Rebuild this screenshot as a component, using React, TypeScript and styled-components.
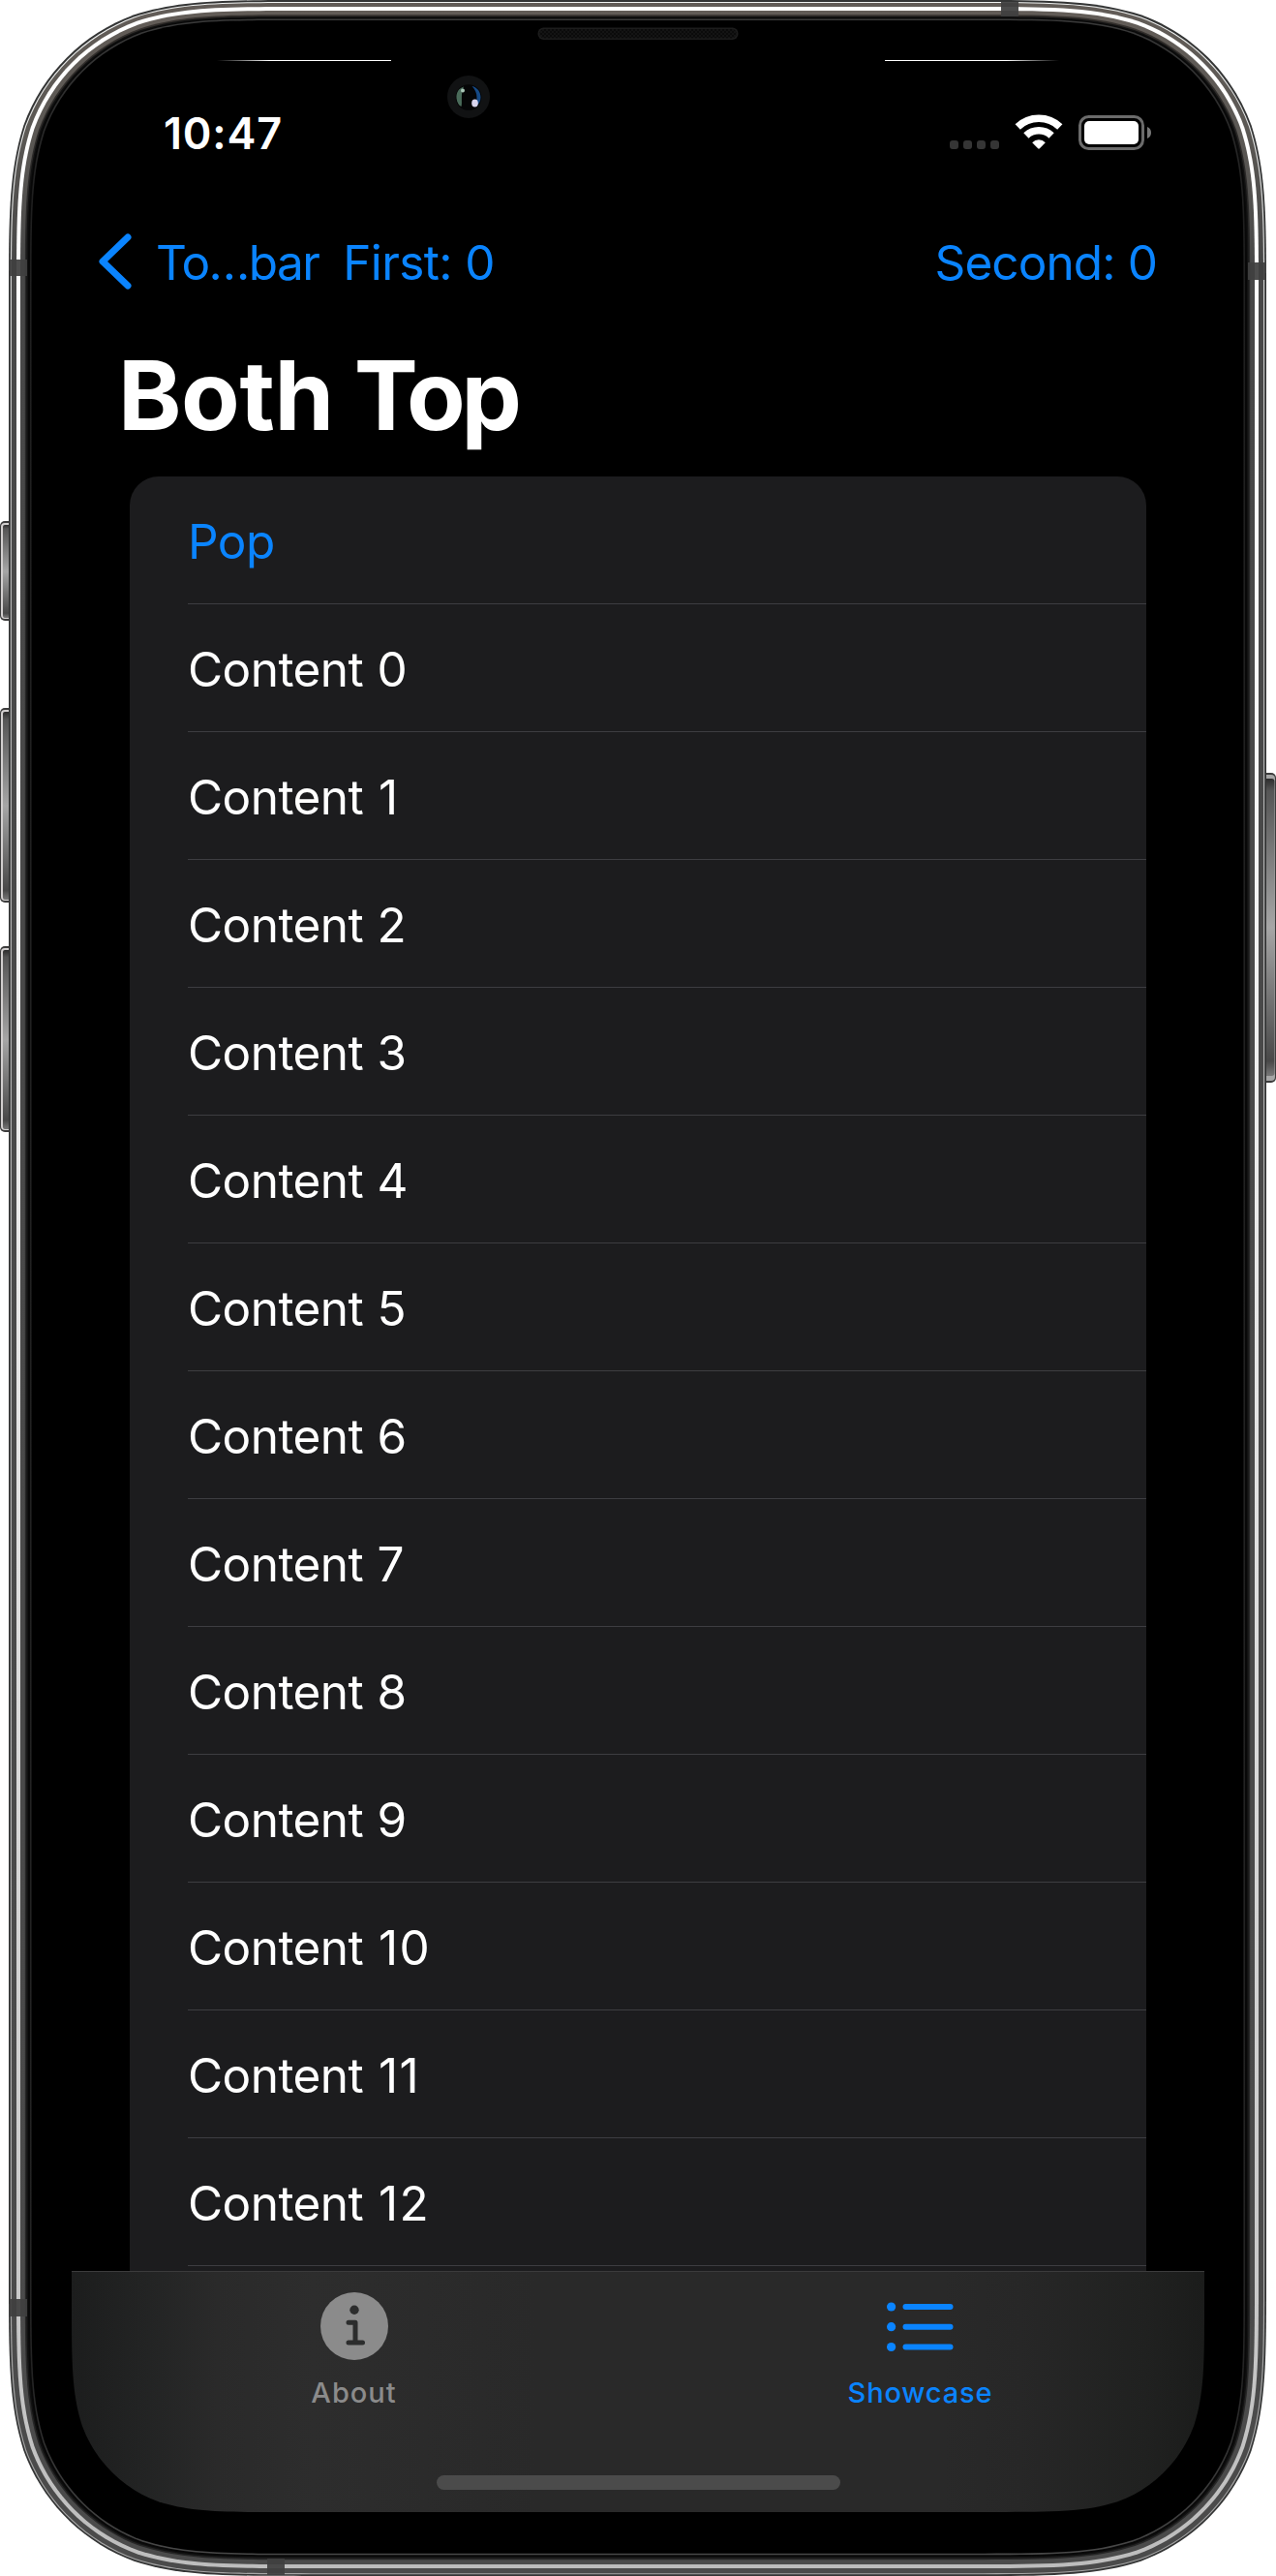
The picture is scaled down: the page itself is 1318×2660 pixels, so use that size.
import React from 'react';
import styled, { createGlobalStyle } from 'styled-components';

const BLUE = '#0a84ff';

const GlobalStyle = createGlobalStyle`
  body { margin: 0; background: #fff; }
`;

/** Rounded rectangle with continuous-curvature corners. */
function squircle(x0: number, y0: number, x1: number, y1: number, r: number): string {
  const corner = (
    cx: number, cy: number, ux: number, uy: number, vx: number, vy: number,
  ) => {
    // (ux, uy) points back along the incoming edge, (vx, vy) along the outgoing edge
    const p = (a: number, b: number) =>
      `${(cx + (ux * a + vx * b) * r).toFixed(2)} ${(cy + (uy * a + vy * b) * r).toFixed(2)}`;
    return (
      `L${p(1.528665, 0)} C${p(1.088493, 0)} ${p(0.868407, 0)} ${p(0.631494, 0.074911)} ` +
      `C${p(0.372824, 0.16906)} ${p(0.16906, 0.372824)} ${p(0.074911, 0.631494)} ` +
      `C${p(0, 0.868407)} ${p(0, 1.088493)} ${p(0, 1.528665)} `
    );
  };
  return (
    `M${(x0 + x1) / 2} ${y0} ` +
    corner(x1, y0, -1, 0, 0, 1) +
    corner(x1, y1, 0, -1, -1, 0) +
    corner(x0, y1, 1, 0, 0, -1) +
    corner(x0, y0, 0, 1, 1, 0) +
    'Z'
  );
}

const Device = styled.div`
  position: relative;
  box-sizing: border-box;
  width: 1318px;
  height: 2660px;
  padding: 62px 74px 66px;
  overflow: hidden;
  font-family: 'Inter', 'Liberation Sans', sans-serif;
  color: #fff;
`;

const Bezel = styled.svg`
  position: absolute;
  inset: 0;
  display: block;
`;

const Screen = styled.main`
  position: relative;
  display: flex;
  flex-direction: column;
  width: 1170px;
  height: 2532px;
`;

const StatusBar = styled.header`
  display: flex;
  align-items: center;
  justify-content: space-between;
  box-sizing: border-box;
  height: 141px;
  padding: 11px 55px 0 95px;
`;

const Text = styled.span<{ $track?: number }>`
  letter-spacing: ${(p) => p.$track ?? 0}px;
  white-space: pre;
`;

const Time = styled(Text)`
  padding-bottom: 1px;
  font-size: 45px;
  font-weight: 600;
`;

const StatusIcons = styled.svg`
  display: block;
`;

const NavBar = styled.nav`
  display: flex;
  align-items: center;
  height: 132px;
  padding: 0 49px 0 27.5px;
  color: ${BLUE};
  font-size: 49.5px;
`;

const NavButton = styled.button<{ $track: number; $left?: string }>`
  display: flex;
  align-items: center;
  gap: 23.5px;
  margin: 4px 0 0 ${(p) => p.$left ?? '0'};
  padding: 0;
  border: 0;
  background: none;
  color: inherit;
  font: inherit;
  letter-spacing: ${(p) => p.$track}px;
  white-space: nowrap;
`;

const Chevron = styled.svg`
  display: block;
  margin-top: -2px;
`;

const LargeTitle = styled.h1`
  display: flex;
  align-items: center;
  box-sizing: border-box;
  height: 157px;
  margin: 0;
  padding: 0 48px 12px;
  font-size: 99px;
  font-weight: 700;
`;

const TitleTail = styled(Text)`
  margin-left: -2px;
`;

const ListViewport = styled.section`
  flex: 1;
  min-height: 0;
  overflow: hidden;
  padding: 0 60px;
`;

const Card = styled.ul`
  min-height: 1900px;
  margin: 0;
  padding: 0;
  list-style: none;
  background: #1c1c1e;
  border-radius: 30px 30px 0 0;
`;

const Row = styled.li<{ $link?: boolean }>`
  display: flex;
  align-items: center;
  box-sizing: border-box;
  height: 132px;
  margin-left: 60px;
  padding-top: 2px;
  border-bottom: 1px solid #3d3d41;
  color: ${(p) => (p.$link ? BLUE : '#fff')};
  font-size: 49.5px;
`;

const Digits = styled.span<{ $lead: number }>`
  margin-left: ${(p) => p.$lead}px;
  letter-spacing: 1.3px;
`;

const TabBar = styled.footer`
  position: relative;
  display: flex;
  box-sizing: border-box;
  height: 249px;
  border-top: 1px solid #3b3b3c;
  background: linear-gradient(
    90deg, #1c1d1d 0, #232424 80px, #2a2a2a 150px, #2d2d2d 250px, #292929 480px,
    #292929 900px, #272727 980px, #202120 1110px, #1b1c1b 100%
  );
  clip-path: path('${squircle(0, -600, 1170, 249, 142)}');
`;

const Tab = styled.button<{ $active?: boolean; $track: number }>`
  display: flex;
  flex: 1;
  flex-direction: column;
  align-items: center;
  gap: 14px;
  margin: 0;
  padding: 20px 2px 0 0;
  border: 0;
  background: none;
  color: ${(p) => (p.$active ? BLUE : '#8b8b8b')};
  font: 500 29px/38px 'Inter', 'Liberation Sans', sans-serif;
  letter-spacing: ${(p) => p.$track}px;
`;

const HomeIndicator = styled.div`
  position: absolute;
  bottom: 23px;
  left: 377px;
  width: 417px;
  height: 15px;
  border-radius: 8px;
  background: #4b4b4b;
`;

// Edge insets (left/right, top, bottom) and paint of each ring, outermost first
const RINGS: [number, number, number, string][] = [
  [0, 0, 0, '#343535'],
  [1.8, 2, 1.7, 'url(#shine)'],
  [3, 3, 2.8, 'url(#metal)'],
  [8, 7, 8, 'url(#stripe)'],
  [12, 11, 12, 'url(#metal)'],
];

const INNER: [number, number, string][] = [
  [16.8, 0, 'url(#edge)'],
  [18.4, 0, '#111'],
  [20, 0, '#080808'],
  [22, 1, 'url(#lip)'],
  [23.6, 1, '#000'],
];

// Top edge and height of the left-hand keys
const SIDE_KEYS: [number, number][] = [
  [538, 103],
  [731, 201],
  [977, 192],
];

function Hardware() {
  return (
    <Bezel width="1318" height="2660" viewBox="0 0 1318 2660" aria-hidden="true">
      <defs>
        <linearGradient id="metal" x1="0" y1="0" x2="0" y2="1">
          <stop offset="0" stopColor="#625c57" />
          <stop offset="0.05" stopColor="#5b5854" />
          <stop offset="0.1" stopColor="#484848" />
          <stop offset="1" stopColor="#4b4b4b" />
        </linearGradient>
        <linearGradient id="stripe" x1="0" y1="0" x2="0" y2="1">
          <stop offset="0" stopColor="#fff" />
          <stop offset="0.25" stopColor="#fbfbfb" />
          <stop offset="0.9" stopColor="#c8c8c8" />
          <stop offset="1" stopColor="#bdbdbd" />
        </linearGradient>
        <linearGradient id="shine" x1="0" y1="0" x2="0" y2="1">
          <stop offset="0" stopColor="#f0f2f1" />
          <stop offset="0.2" stopColor="#b5b5b5" />
          <stop offset="1" stopColor="#a5a5a5" />
        </linearGradient>
        <linearGradient id="edge" x1="0" y1="0" x2="0" y2="1">
          <stop offset="0" stopColor="#332f2c" />
          <stop offset="0.1" stopColor="#262626" />
          <stop offset="1" stopColor="#262626" />
        </linearGradient>
        <linearGradient id="lip" x1="0" y1="0" x2="0" y2="1">
          <stop offset="0" stopColor="#3a3a3a" />
          <stop offset="0.07" stopColor="#1f1f1f" />
          <stop offset="0.93" stopColor="#242424" />
          <stop offset="1" stopColor="#484848" />
        </linearGradient>
        <linearGradient id="key" x1="0" y1="0" x2="0" y2="1">
          <stop offset="0" stopColor="#2c2c2c" />
          <stop offset="0.04" stopColor="#555" />
          <stop offset="0.5" stopColor="#a6a6a6" />
          <stop offset="0.95" stopColor="#484848" />
          <stop offset="1" stopColor="#777" />
        </linearGradient>
        <linearGradient id="glintL">
          <stop offset="0" stopColor="#fff" stopOpacity="0" />
          <stop offset="0.3" stopColor="#fff" />
          <stop offset="1" stopColor="#fff" />
        </linearGradient>
        <linearGradient id="glintR">
          <stop offset="0" stopColor="#fff" />
          <stop offset="0.7" stopColor="#fff" />
          <stop offset="1" stopColor="#fff" stopOpacity="0" />
        </linearGradient>
        <pattern id="mesh" width="4" height="4" patternUnits="userSpaceOnUse">
          <rect width="4" height="4" fill="#141414" />
          <circle cx="1" cy="1" r="1" fill="#070707" />
          <circle cx="3" cy="3" r="1" fill="#070707" />
        </pattern>
      </defs>

      {SIDE_KEYS.map(([y, h]) => (
        <g key={y}>
          <rect x="0" y={y} width="14" height={h} rx="5" fill="#3c3c3c" />
          <rect x="1" y={y + 2} width="14" height={h - 4} rx="4" fill="#d2cfcf" />
          <rect x="3" y={y + 4} width="14" height={h - 7} rx="2" fill="url(#key)" />
        </g>
      ))}
      <rect x="1300" y="798" width="18" height="320" rx="5" fill="#3c3c3c" />
      <rect x="1300" y="800" width="17" height="316" rx="4" fill="#a5a5a5" />
      <rect x="1300" y="804" width="16.5" height="307" rx="3" fill="url(#key)" />

      {RINGS.map(([side, top, bottom, fill]) => (
        <path
          key={side}
          d={squircle(9 + side, top, 1308 - side, 2660 - bottom, 205 - side)}
          fill={fill}
        />
      ))}
      {INNER.map(([side, extra, fill]) => (
        <path
          key={side}
          d={squircle(9 + side, side - 1.5 - extra, 1308 - side, 2660 - side + extra * 0.3, 205 - side)}
          fill={fill}
        />
      ))}

      <g fill="#404040" fillOpacity="0.93">
        <rect x="10" y="268" width="18" height="17" />
        <rect x="1289" y="271" width="18" height="18" />
        <rect x="1034" y="2" width="18" height="15" />
        <rect x="276" y="2642" width="18" height="17" />
        <rect x="10" y="2374" width="18" height="18" />
      </g>

      <rect x="555.5" y="28.5" width="207" height="12.5" rx="6" fill="#1c1c1c" />
      <rect x="557" y="30" width="204" height="9.5" rx="4.7" fill="url(#mesh)" />

      <rect x="224" y="62" width="180" height="1" fill="url(#glintL)" />
      <rect x="914" y="62" width="180" height="1" fill="url(#glintR)" />

      <circle cx="484" cy="100" r="22" fill="#111213" />
      <circle cx="484" cy="100.5" r="13.3" fill="#050506" />
      <path d="M479 89.500c-5 1.500-8 6-7.500 12 .4 4.500 2.600 7.500 5 8.500.7-3 .3-5 .4-9 0-5 .6-8 2.100-11.500Z" fill="#4a6b5a" />
      <path d="M487.500 89c5.500 1 9 6 9 11.500 0 4-2 7.500-4.500 9-1-2 .5-4.500.5-9s-2-8.500-5-11.500Z" fill="#164a86" />
      <circle cx="478" cy="93.5" r="2" fill="#abc8b8" />
      <ellipse cx="490.5" cy="106.5" rx="3.3" ry="4" fill="#d9d5ee" />
    </Bezel>
  );
}

function StatusGlyphs() {
  return (
    <StatusIcons width="208" height="40" viewBox="981 118 208 40" aria-hidden="true">
      {[981, 995, 1009, 1023].map((x) => (
        <rect key={x} x={x} y="145" width="9" height="9" rx="3" fill="#353535" />
      ))}
      <g fill="none" stroke="#fff" strokeWidth="7.6">
        <path d="M1051.200 131a31.500 31.500 0 0 1 43.600 0" />
        <path d="M1059.900 140a19 19 0 0 1 26.200 0" />
      </g>
      <path d="M1066.200 147.200a9.500 9.500 0 0 1 13.600 0l-5.900 6.100q-.9.900-1.800 0Z" fill="#fff" />
      <rect x="1115.5" y="120.5" width="65" height="33" rx="9" fill="none" stroke="#6b6b6b" strokeWidth="3" />
      <rect x="1120" y="125" width="56" height="24" rx="5" fill="#fff" />
      <path d="M1185 131v12c2.600-1 4-3.300 4-6s-1.400-5-4-6Z" fill="#777" />
    </StatusIcons>
  );
}

function InfoIcon() {
  return (
    <svg width="70" height="72" viewBox="0 0 70 72" aria-hidden="true">
      <circle cx="35" cy="36" r="35" fill="#8b8b8b" />
      <circle cx="35" cy="19.2" r="4.7" fill="#2c2d2d" />
      <path
        d="M29 32.200h7V53M29 53h14.500"
        fill="none" stroke="#2c2d2d" strokeWidth="5" strokeLinecap="round" strokeLinejoin="round"
      />
    </svg>
  );
}

function ListIcon() {
  return (
    <svg width="70" height="72" viewBox="0 0 70 72" aria-hidden="true" fill={BLUE}>
      {[16, 36.7, 57.5].map((y) => (
        <g key={y}>
          <circle cx="4.6" cy={y} r="4.6" />
          <rect x="16.5" y={y - 3} width="52" height="6" rx="3" />
        </g>
      ))}
    </svg>
  );
}

const ROWS = Array.from({ length: 13 }, (_, i) => String(i));

export default function App() {
  return (
    <>
      <GlobalStyle />
      <Device>
        <Hardware />
        <Screen>
          <StatusBar>
            <Time $track={0.8}>10:47</Time>
            <StatusGlyphs />
          </StatusBar>
          <NavBar>
            <NavButton $track={-1.6}>
              <Chevron width="36" height="58" viewBox="0 0 36 58" aria-hidden="true">
                <path
                  d="M30 4 4 29l26 25" fill="none" stroke="currentColor"
                  strokeWidth="7" strokeLinecap="round" strokeLinejoin="round"
                />
              </Chevron>
              To…bar
            </NavButton>
            <NavButton $track={-0.6} $left="25px">First: 0</NavButton>
            <NavButton $track={-0.9} $left="auto">Second: 0</NavButton>
          </NavBar>
          <LargeTitle>
            <Text $track={-0.4}>{'Both '}</Text>
            <TitleTail $track={-4.2}>Top</TitleTail>
          </LargeTitle>
          <ListViewport>
            <Card>
              <Row $link><Text $track={-0.5}>Pop</Text></Row>
              {ROWS.map((n) => (
                <Row key={n}>
                  <Text $track={-0.56}>
                    {'Content '}
                    <Digits $lead={n.startsWith('1') ? 2.5 : 1}>{n}</Digits>
                  </Text>
                </Row>
              ))}
            </Card>
          </ListViewport>
          <TabBar>
            <Tab $track={1}><InfoIcon />About</Tab>
            <Tab $active $track={0.87}><ListIcon />Showcase</Tab>
            <HomeIndicator />
          </TabBar>
        </Screen>
      </Device>
    </>
  );
}
